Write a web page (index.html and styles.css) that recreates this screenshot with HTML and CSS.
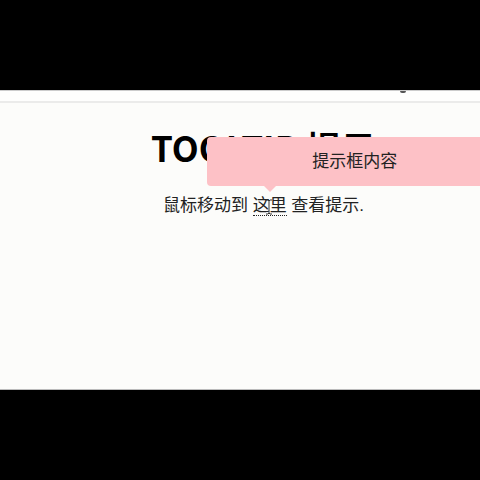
FILE: index.html
```
<!DOCTYPE html>
<html lang="zh-CN">
<head>
    <meta charset="UTF-8">
    <meta name="viewport" content="width=device-width, initial-scale=1.0">
    <title>Tooltip</title>
    <link rel="stylesheet" href="styles.css">
</head>
<body>
    <div class="screen">
        <div class="topbar">
            <span class="dot"></span>
        </div>
        <div class="container">
            <h1>TOOLTIP 提示</h1>
            <p>鼠标移动到
                <span class="tooltip" tabindex="0" aria-describedby="tip">这里
                    <span class="tooltip-text" id="tip" role="tooltip">提示框内容</span>
                    <!-- text cursor -->
                    <svg class="cursor" width="8" height="16" viewBox="0 0 8 16" aria-hidden="true">
                        <path d="M1 1h2l1 1 1-1h2M4 2v12M1 15h2l1-1 1 1h2" fill="none" stroke="#333"/>
                    </svg>
                </span>
                查看提示.</p>
        </div>
    </div>
</body>
</html>
```
FILE: styles.css
```
* {
    box-sizing: border-box;
}
body {
    margin: 0;
    min-height: 100vh;
    display: grid;
    grid-template-rows: 3fr 10fr 3fr;
    background: #000;
    color: #222;
    font-family: "Liberation Sans", "Noto Sans CJK SC", sans-serif;
    font-size: 17px;
    line-height: 24px;
}
.screen {
    grid-row: 2;
    overflow: hidden;
    background: #fcfcfa;
    border-bottom: 1px solid #bbb;
}
.topbar {
    height: 13px;
    background: #fefefd;
    border-top: 1px solid #ccc;
    border-bottom: 2px solid #ebebea;
}
.dot {
    display: block;
    width: 6px;
    height: 2px;
    margin-left: 83.4%;
    background: #555;
    border-radius: 0 0 3px 3px;
}
.container {
    padding: 22px 0 0 47px;
    text-align: center;
}
h1 {
    margin: 0;
    color: #000;
    font-family: "Noto Sans CJK SC", sans-serif;
    font-size: 35px;
    line-height: 44px;
}
p {
    margin: 25px 0 0;
}
.tooltip {
    position: relative;
    display: inline-block;
    border-bottom: 1px dotted #222;
    line-height: 18px;
}
.tooltip-text {
    position: absolute;
    bottom: 29px;
    left: -46px;
    width: 296px;
    padding: 13px 0 12px;
    background: #fdc1c6;
    border-radius: 4px;
    line-height: 24px;
}
.tooltip-text::after {
    content: "";
    position: absolute;
    top: 100%;
    left: 57px;
    border: 6px solid transparent;
    border-top-color: #fdc1c6;
}
.cursor {
    position: absolute;
    left: 12px;
    top: 2px;
}
```
